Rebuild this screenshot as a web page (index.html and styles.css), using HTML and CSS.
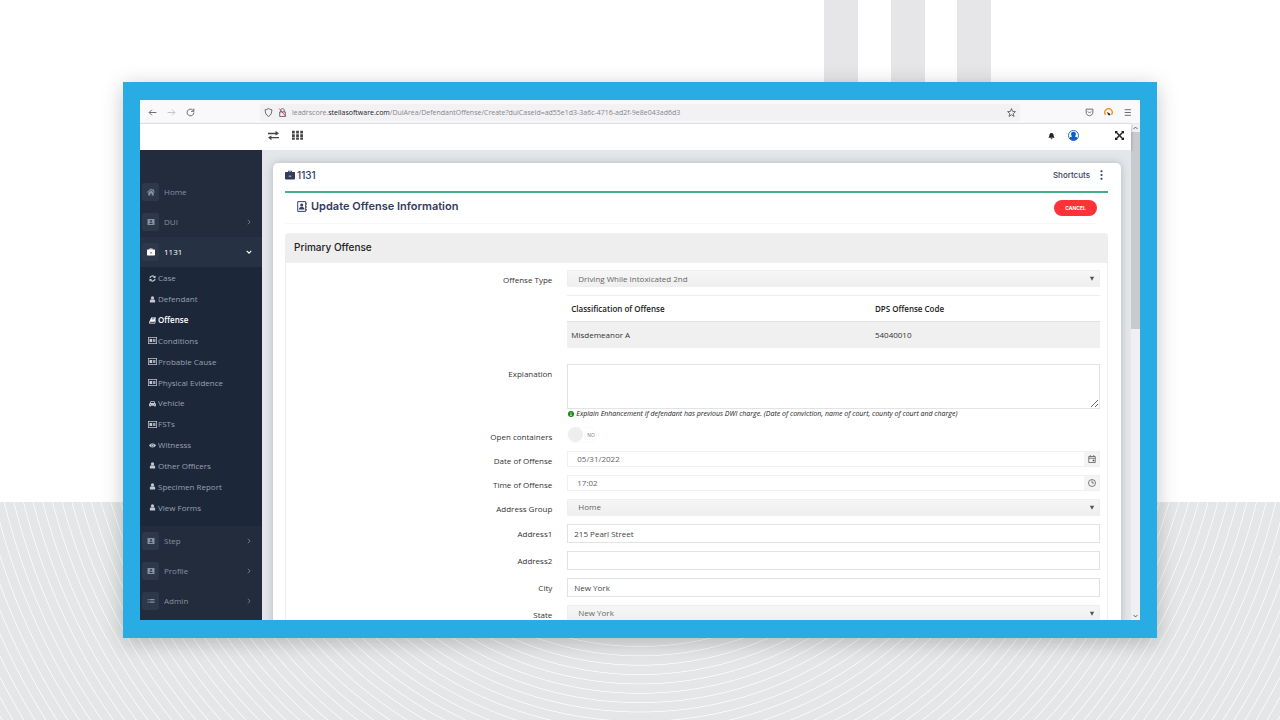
FILE: index.html
```html
<!DOCTYPE html>
<html lang="en">
<head>
<meta charset="utf-8">
<title>Update Offense Information</title>
<link rel="stylesheet" href="styles.css">
</head>
<body>
<svg class="defs" aria-hidden="true">
  <symbol id="home" viewBox="0 0 16 16"><path d="M8 1 0 8l1 1.300L8 3l7 6.300L16 8l-2.500-2.200V2h-2v2zM8 4.500 2.500 9.400V15h4v-4h3v4h4V9.400z"/></symbol>
  <symbol id="badge" viewBox="0 0 16 16"><path fill-rule="evenodd" d="M1 2h14v12H1zM8 4a2 2 0 1 0 0 4 2 2 0 0 0 0-4zM4.500 12h7c0-3.500-7-3.500-7 0z"/></symbol>
  <symbol id="case" viewBox="0 0 16 16"><path fill-rule="evenodd" d="M5 3V1h6v2h4l1 1v5H0V4l1-1zm1.500 0h3v-.700h-3zM0 9h6v1.500h4V9h6v5l-1 1H1l-1-1z"/></symbol>
  <symbol id="sync" viewBox="0 0 16 16"><path fill="none" stroke="currentColor" stroke-width="2.600" d="M2 7a6 6 0 0 1 11-2M14 9A6 6 0 0 1 3 11"/><path d="M15 1v6H9zM1 15V9h6z"/></symbol>
  <symbol id="user" viewBox="0 0 16 16"><circle cx="8" cy="4.500" r="3.700"/><path d="M2 15V11c0-4 3-3 6-3s6-1 6 3v4z"/></symbol>
  <symbol id="book" viewBox="0 0 16 16"><path fill-rule="evenodd" d="M5 1h11l-3 10H3c-1 0-1 2 0 2h10l2-7h1l-2 9H2c-2 0-2-2-1-5zM6.500 3.500 6 5h6l.500-1.500z"/></symbol>
  <symbol id="card" viewBox="0 0 18 14"><path fill-rule="evenodd" d="M0 0h18v14H0zm1.500 1.500v11h15v-11zM3 4h5v6H3zm6.500 0H15v1.500H9.500zm0 2.300H15v1.500H9.500zm0 2.300H15V10H9.500z"/></symbol>
  <symbol id="car" viewBox="0 0 16 16"><path fill-rule="evenodd" d="M4 2h8l2 5 2 2v4h-1v2h-3v-2H4v2H1v-2H0V9l2-2zm1 2L4 7h8l-1-3zM3 9a1 1 0 1 0 0 2 1 1 0 0 0 0-2zm10 0a1 1 0 1 0 0 2 1 1 0 0 0 0-2z"/></symbol>
  <symbol id="eye" viewBox="0 0 16 16"><path fill-rule="evenodd" d="M0 8c4-6 12-6 16 0-4 6-12 6-16 0zm5 0a3 3 0 1 0 6 0 3 3 0 0 0-6 0z"/><circle cx="8" cy="8" r="2.200"/></symbol>
  <symbol id="list" viewBox="0 0 16 16"><path d="M1 4h2v2.500H1zm4 0h10v2.500H5zM1 9h2v2.500H1zm4 0h10v2.500H5z"/></symbol>
  <symbol id="right" viewBox="0 0 16 16"><path fill="none" stroke="currentColor" stroke-width="2" d="m5 2 6 6-6 6"/></symbol>
  <symbol id="down" viewBox="0 0 16 16"><path fill="none" stroke="currentColor" stroke-width="3" d="m2 5 6 6 6-6"/></symbol>
  <symbol id="up" viewBox="0 0 16 16"><path fill="none" stroke="currentColor" stroke-width="3" d="m2 11 6-6 6 6"/></symbol>
  <symbol id="triangle" viewBox="0 0 16 16"><path d="M1 2h14L8 15z"/></symbol>
</svg>

<svg class="backdrop" viewBox="0 0 1280 720" preserveAspectRatio="xMidYMax slice" aria-hidden="true">
  <defs>
    <radialGradient id="rings" gradientUnits="userSpaceOnUse" cx="640" cy="348" r="9.360" spreadMethod="repeat">
      <stop offset="0" stop-color="#e5e6e7"/><stop offset=".810" stop-color="#e5e6e7"/>
      <stop offset=".870" stop-color="#f8f8f8"/><stop offset=".910" stop-color="#f8f8f8"/>
      <stop offset=".970" stop-color="#e5e6e7"/><stop offset="1" stop-color="#e5e6e7"/>
    </radialGradient>
  </defs>
  <path fill="#e6e6e8" d="M824 0h34v90h-34zM891 0h34v90h-34zM957 0h34v90h-34z"/>
  <path fill="url(#rings)" d="M0 502h1280v218H0z"/>
</svg>

<div class="frame">
  <div class="browser">
    <div class="toolbar">
      <div class="nav-buttons">
        <button aria-label="Back"><svg viewBox="0 0 16 16"><path d="M15 8H2m5-5L2 8l5 5"/></svg></button>
        <button class="faded" aria-label="Forward"><svg viewBox="0 0 16 16"><path d="M1 8h13M9 3l5 5-5 5"/></svg></button>
        <button aria-label="Reload"><svg viewBox="0 0 16 16"><path d="M14 8a6 6 0 1 1-2-4.500L14 5M14 1v5H9"/></svg></button>
      </div>
      <div class="address">
        <svg viewBox="0 0 16 16"><path d="M8 1c2 1.500 4 2 6 2 0 6-2 10-6 12-4-2-6-6-6-12 2 0 4-.500 6-2z"/></svg>
        <svg viewBox="0 0 16 16"><path d="M3 7h10v8H3zm2 0V4c0-4 6-4 6 0v3"/><path stroke="#e22850" d="m2 1 12 14"/></svg>
        <span class="url">leadrscore.<b>stellasoftware.com</b>/DuiArea/DefendantOffense/Create?duiCaseId=ad55e1d3-3a6c-4716-ad2f-9e8e043ad6d3</span>
        <button class="star" aria-label="Bookmark"><svg viewBox="0 0 16 16"><path d="m8 1 2 5 5 .500-4 3.500 1.500 5L8 12l-4.500 3L5 10 1 6.500 6 6z"/></svg></button>
      </div>
      <div class="browser-tools">
        <button aria-label="Save"><svg viewBox="0 0 16 16"><path d="M2 2h12v5c0 9-12 9-12 0zM5 6l3 3 3-3"/></svg></button>
        <button aria-label="Extension"><svg viewBox="0 0 16 16"><path stroke="#f0951d" stroke-width="2.400" d="M3 12a6.500 6.500 0 1 1 10 0"/><path fill="#222" stroke="none" d="m5 7 6 3v3H8z"/></svg></button>
        <button aria-label="Menu"><svg viewBox="0 0 16 16"><path d="M3 3h11M3 8h11M3 13h11"/></svg></button>
      </div>
    </div>

    <div class="page">
      <div class="app">
        <header class="app-header">
          <div class="header-left">
            <button aria-label="Toggle sidebar"><svg viewBox="0 0 16 16"><path d="M0 4h11V1l5 4-5 3V6H0zM16 12H5v3l-5-4 5-3v2h11z"/></svg></button>
            <button aria-label="Apps"><svg viewBox="0 0 16 16"><path d="M0 1h4v4H0zm6 0h4v4H6zm6 0h4v4h-4zM0 6h4v4H0zm6 0h4v4H6zm6 0h4v4h-4zM0 11h4v3H0zm6 0h4v3H6zm6 0h4v3h-4z"/></svg></button>
          </div>
          <div class="header-right">
            <button class="bell" aria-label="Notifications"><svg viewBox="0 0 16 16"><path d="M8 1C4 1 3 5 3 8l-2 4h14l-2-4c0-3-1-7-5-7zM6 13h4c0 3-4 3-4 0z"/></svg></button>
            <button class="account" aria-label="Account"><svg viewBox="0 0 16 16"><circle cx="8" cy="8" r="7.300" fill="#fff" stroke="#0b5fc8" stroke-width="1.300"/><path d="M2 12c1-2 2.500-2 4-2.500C3.500 7 4 2.500 8 2.500s4.500 4.500 2 7c1.500.500 3 .500 4 2.500-3 4-9 4-12 0z"/></svg></button>
            <button class="expand" aria-label="Full screen"><svg viewBox="0 0 16 16"><path d="M0 0h5L3.600 1.800 8 6.200l4.400-4.400L11 0h5v5l-1.800-1.400L9.800 8l4.400 4.400L16 11v5h-5l1.400-1.800L8 9.800l-4.400 4.400L5 16H0v-5l1.800 1.400L6.200 8 1.800 3.600 0 5z"/></svg></button>
          </div>
        </header>

        <div class="workspace">
          <nav class="sidebar">
            <a class="item" href="#"><span class="tile"><svg><use href="#home"/></svg></span>Home</a>
            <a class="item" href="#"><span class="tile"><svg><use href="#badge"/></svg></span>DUI<svg class="arrow"><use href="#right"/></svg></a>
            <a class="item open" href="#"><span class="tile"><svg><use href="#case"/></svg></span>1131<svg class="arrow"><use href="#down"/></svg></a>
            <div class="submenu">
              <a href="#"><svg><use href="#sync"/></svg>Case</a>
              <a href="#"><svg><use href="#user"/></svg>Defendant</a>
              <a class="current" href="#"><svg><use href="#book"/></svg>Offense</a>
              <a href="#"><svg><use href="#card"/></svg>Conditions</a>
              <a href="#"><svg><use href="#card"/></svg>Probable Cause</a>
              <a href="#"><svg><use href="#card"/></svg>Physical Evidence</a>
              <a href="#"><svg><use href="#car"/></svg>Vehicle</a>
              <a href="#"><svg><use href="#card"/></svg>FSTs</a>
              <a href="#"><svg><use href="#eye"/></svg>Witnesss</a>
              <a href="#"><svg><use href="#user"/></svg>Other Officers</a>
              <a href="#"><svg><use href="#user"/></svg>Specimen Report</a>
              <a href="#"><svg><use href="#user"/></svg>View Forms</a>
            </div>
            <a class="item" href="#"><span class="tile"><svg><use href="#badge"/></svg></span>Step<svg class="arrow"><use href="#right"/></svg></a>
            <a class="item" href="#"><span class="tile"><svg><use href="#badge"/></svg></span>Profile<svg class="arrow"><use href="#right"/></svg></a>
            <a class="item" href="#"><span class="tile"><svg><use href="#list"/></svg></span>Admin<svg class="arrow"><use href="#right"/></svg></a>
          </nav>

          <main class="card">
            <div class="case-bar">
              <h1><svg><use href="#case"/></svg>1131</h1>
              <button class="shortcuts">Shortcuts<svg viewBox="0 0 4 16"><circle cx="2" cy="2" r="1.700"/><circle cx="2" cy="8" r="1.700"/><circle cx="2" cy="14" r="1.700"/></svg></button>
            </div>
            <div class="title-bar">
              <h2><svg viewBox="0 0 16 18"><path fill="none" stroke="currentColor" stroke-width="1.600" d="M1 1h13v16H1z"/><path d="M15 3h1v3h-1zm0 5h1v3h-1zm0 5h1v3h-1z"/><circle cx="7.500" cy="6.500" r="2.500"/><path d="M3 14c0-6 9-6 9 0z"/></svg>Update Offense Information</h2>
              <button class="cancel">CANCEL</button>
            </div>
            <section class="panel">
              <h3>Primary Offense</h3>
              <form class="form">
                <div class="row">
                  <label for="type">Offense Type</label>
                  <div>
                    <div class="select"><select id="type"><option>Driving While Intoxicated 2nd</option></select><svg><use href="#triangle"/></svg></div>
                    <table>
                      <thead><tr><th>Classification of Offense</th><th>DPS Offense Code</th></tr></thead>
                      <tbody><tr><td>Misdemeanor A</td><td>54040010</td></tr></tbody>
                    </table>
                  </div>
                </div>
                <div class="row">
                  <label for="explanation">Explanation</label>
                  <div>
                    <textarea id="explanation"></textarea>
                    <p class="hint"><svg viewBox="0 0 16 16"><circle cx="8" cy="8" r="8" fill="#138a13"/><path fill="#fff" d="M7 3h2v2H7zM6 6.500h3V12h1v1H6v-1h1V8H6z"/></svg>Explain Enhancement if defendant has previous DWI charge. (Date of conviction, name of court, county of court and charge)</p>
                  </div>
                </div>
                <div class="row">
                  <label for="containers">Open containers</label>
                  <div class="toggle"><input id="containers" type="checkbox" role="switch"><span>NO</span></div>
                </div>
                <div class="row">
                  <label for="date">Date of Offense</label>
                  <div class="picker"><input id="date" type="text" value="05/31/2022"><button type="button" aria-label="Pick date"><svg viewBox="0 0 16 16"><path d="M1.500 3h13v12h-13zm0 3.500h13M4.500 0v3M11.500 0v3"/><path fill="#555" d="M10 10h2v2h-2z"/></svg></button></div>
                </div>
                <div class="row">
                  <label for="time">Time of Offense</label>
                  <div class="picker"><input id="time" type="text" value="17:02"><button type="button" aria-label="Pick time"><svg viewBox="0 0 16 16"><circle cx="8" cy="8" r="7"/><path d="M8 3v5h4"/></svg></button></div>
                </div>
                <div class="row">
                  <label for="group">Address Group</label>
                  <div class="select"><select id="group"><option>Home</option></select><svg><use href="#triangle"/></svg></div>
                </div>
                <div class="row">
                  <label for="address1">Address1</label>
                  <input class="text" id="address1" type="text" value="215 Pearl Street">
                </div>
                <div class="row">
                  <label for="address2">Address2</label>
                  <input class="text" id="address2" type="text">
                </div>
                <div class="row">
                  <label for="city">City</label>
                  <input class="text" id="city" type="text" value="New York">
                </div>
                <div class="row">
                  <label for="state">State</label>
                  <div class="select"><select id="state"><option>New York</option></select><svg><use href="#triangle"/></svg></div>
                </div>
              </form>
            </section>
          </main>
        </div>
      </div>
      <div class="scrollbar" aria-hidden="true">
        <svg><use href="#up"/></svg>
        <div class="thumb"></div>
        <svg><use href="#down"/></svg>
      </div>
    </div>
  </div>
</div>
</body>
</html>
```

FILE: styles.css
```css
* { box-sizing: border-box; }

body {
  margin: 0;
  height: 100vh;
  display: flex;
  padding: 82px 123px;
  background: #fff;
  font: 8px/10px "Open Sans", "Noto Sans", sans-serif;
  color: #333;
  overflow: hidden;
}

button, input, select, textarea { font: inherit; color: inherit; }
button { border: 0; padding: 0; background: none; display: flex; align-items: center; }
svg { fill: currentColor; flex: none; }
a { color: inherit; text-decoration: none; }
h1, h2, h3, p { margin: 0; }
h1, h2, h3, .shortcuts, .cancel { font-family: Inter, "Noto Sans", sans-serif; }

.defs { position: absolute; width: 0; height: 0; }
.backdrop { position: absolute; inset: 0; width: 100%; height: 100%; }

.frame {
  position: relative;
  flex: 1;
  min-width: 0;
  display: flex;
  padding: 18px 17px;
  background: #29abe4;
  box-shadow: 0 4px 20px rgba(0, 0, 0, .22);
}
.browser { flex: 1; min-width: 0; display: flex; flex-direction: column; overflow: hidden; background: #fff; }

/* Browser toolbar */
.toolbar {
  flex: none;
  height: 24px;
  padding-top: 2px;
  display: flex;
  align-items: center;
  background: #f9f9fb;
  border-bottom: 1px solid #e9e9ed;
  color: #555;
}
.toolbar svg { width: 9px; height: 9px; fill: none; stroke: currentColor; stroke-width: 1.5; }
.nav-buttons { width: 120px; padding-left: 8px; display: flex; gap: 10px; }
.faded { color: #bbb; }
.address {
  flex: 1;
  max-width: 760px;
  height: 17px;
  padding: 0 4px;
  display: flex;
  align-items: center;
  gap: 5px;
  background: #f2f2f5;
  border-radius: 2px;
}
.url { flex: 1; color: #85858c; white-space: nowrap; overflow: hidden; font-size: 7px; }
.url b { font-weight: 500; color: #222; }
.browser-tools { margin-left: auto; padding-right: 8px; display: flex; gap: 10px; }

/* Application shell */
.page { flex: 1; min-height: 0; display: flex; }
.app { flex: 1; min-width: 0; display: flex; flex-direction: column; }
.app-header {
  position: relative;
  flex: none;
  height: 26px;
  padding: 0 7px 3px 128px;
  display: flex;
  align-items: center;
  justify-content: space-between;
  background: #fff;
  box-shadow: 0 1px 3px rgba(0, 0, 0, .3);
}
.header-left { display: flex; gap: 13px; color: #444; }
.header-left svg { width: 11px; height: 11px; }
.header-right { display: flex; align-items: center; color: #222; }
.header-right svg { width: 9px; height: 9px; }
.header-right .bell svg { width: 7px; height: 8px; }
.header-right .account { margin: 0 36px 0 13px; color: #0b5fc8; }
.header-right .account svg { width: 11px; height: 11px; }

.workspace { position: relative; flex: 1; min-height: 0; display: flex; gap: 11px; padding-right: 10px; background: #e4e7ea; overflow: hidden; }

.sidebar { position: relative; flex: none; width: 122px; padding-top: 27px; background: #222c3c; color: #8791a1; overflow: hidden; }
.item { height: 30px; display: flex; align-items: center; padding: 0 10px 0 2px; }
.tile { width: 17px; height: 18px; margin-right: 5px; display: grid; place-items: center; border-radius: 2px; background: #2d3849; }
.tile svg { width: 8px; height: 8px; }
.arrow { width: 6px; height: 6px; margin-left: auto; }
.open { background: #263143; color: #fff; }
.submenu { height: 259px; padding: 1px 0 8px 8px; display: grid; grid-auto-rows: 1fr; background: #1d273a; color: #98a1b0; }
.submenu a { display: flex; align-items: center; gap: 1px; }
.submenu svg { width: 9px; height: 7px; color: #c2c8d0; }
.submenu .current, .submenu .current svg { color: #fff; font-weight: 600; }

.card {
  flex: 1;
  min-width: 0;
  align-self: flex-start;
  margin-top: 13px;
  padding: 0 13px 20px 12px;
  background: #fff;
  border-radius: 5px;
  box-shadow: 0 0 9px rgba(60, 70, 85, .3);
  color: #343b5c;
}
.case-bar { height: 30px; padding: 0 5px 5px 0; display: flex; align-items: center; justify-content: space-between; border-bottom: 2px solid #43b08c; }
h1 { display: flex; align-items: center; gap: 2px; font-size: 10px; line-height: 16px; font-weight: 500; }
h1 svg { width: 10px; height: 10px; }
.shortcuts { gap: 10px; font-size: 8px; font-weight: 500; }
.shortcuts svg { width: 3px; height: 10px; }
.title-bar { height: 31px; margin-right: 11px; padding: 0 0 0 12px; display: flex; align-items: center; justify-content: space-between; border-bottom: 1px solid #f7f7f9; }
h2 { padding-bottom: 4px; display: flex; align-items: center; gap: 4px; font-size: 11px; line-height: 16px; font-weight: 600; }
h2 svg { width: 10px; height: 11px; }
.cancel { width: 43px; height: 16px; justify-content: center; border-radius: 8px; background: #fd3338; color: #fff; font-size: 5px; font-weight: 700; }

.panel { margin-top: 9px; border: 1px solid #eee; border-radius: 3px; color: #333; }
h3 { height: 29px; padding: 0 8px; background: #eee; font-size: 10px; line-height: 26px; font-weight: 500; color: #222; }

/* Offense form */
.form { padding: 7px 7px 7px 8px; display: flex; flex-direction: column; gap: 8px; }
.row { display: grid; grid-template-columns: minmax(0, 32fr) minmax(0, 66fr); gap: 15px; align-items: start; }
.row label { padding-top: 5px; text-align: right; }
.select { position: relative; }
.select select {
  appearance: none;
  display: block;
  width: 100%;
  height: 17px;
  padding: 0 10px;
  border: 1px solid #efefef;
  border-radius: 1px;
  background: linear-gradient(#f6f6f6, #efefef);
  color: #666;
}
.select svg { position: absolute; right: 5px; top: 6px; width: 6px; height: 5px; color: #555; pointer-events: none; }

table { width: 100%; margin: 8px 0; border-collapse: collapse; border-top: 1px solid #eee; text-align: left; }
th, td { width: 57%; height: 26px; padding: 0 4px; }
th + th, td + td { width: 43%; }
th { color: #222; font-weight: 600; }
td { background: #f0f0f0; border-top: 1px solid #e2e2e2; }

textarea { display: block; width: 100%; height: 45px; padding: 4px 6px; border: 1px solid #e0e4e4; }
.hint { padding-left: 1px; display: flex; align-items: center; gap: 2px; font-style: italic; font-size: 7px; color: #222; }
.hint svg { width: 6px; height: 6px; }

.toggle { height: 16px; width: 30px; display: flex; align-items: center; gap: 4px; border-radius: 8px; border: 1px solid #fafafa; font-size: 5px; color: #777; }
.toggle input { appearance: none; width: 15px; height: 15px; margin: 0; border-radius: 50%; background: #eee; }

.picker { display: flex; height: 16px; border: 1px solid #f1f1f1; }
.picker input { flex: 1; min-width: 0; padding: 0 9px; border: 0; background: none; color: #666; }
.picker button { width: 15px; justify-content: center; background: #f4f4f4; color: #555; }
.picker svg { width: 8px; height: 8px; fill: none; stroke: currentColor; stroke-width: 1.5; }
.text { width: 100%; height: 19px; padding: 0 6px; border: 1px solid #dfe3e3; background: #fff; color: #444; }

/* Page scrollbar */
.scrollbar { flex: none; width: 9px; display: flex; flex-direction: column; align-items: center; background: #f0f0f2; color: #555; }
.scrollbar svg { width: 5px; height: 8px; }
.thumb { width: 100%; height: 197px; margin-bottom: auto; background: #c9cacd; }
```
